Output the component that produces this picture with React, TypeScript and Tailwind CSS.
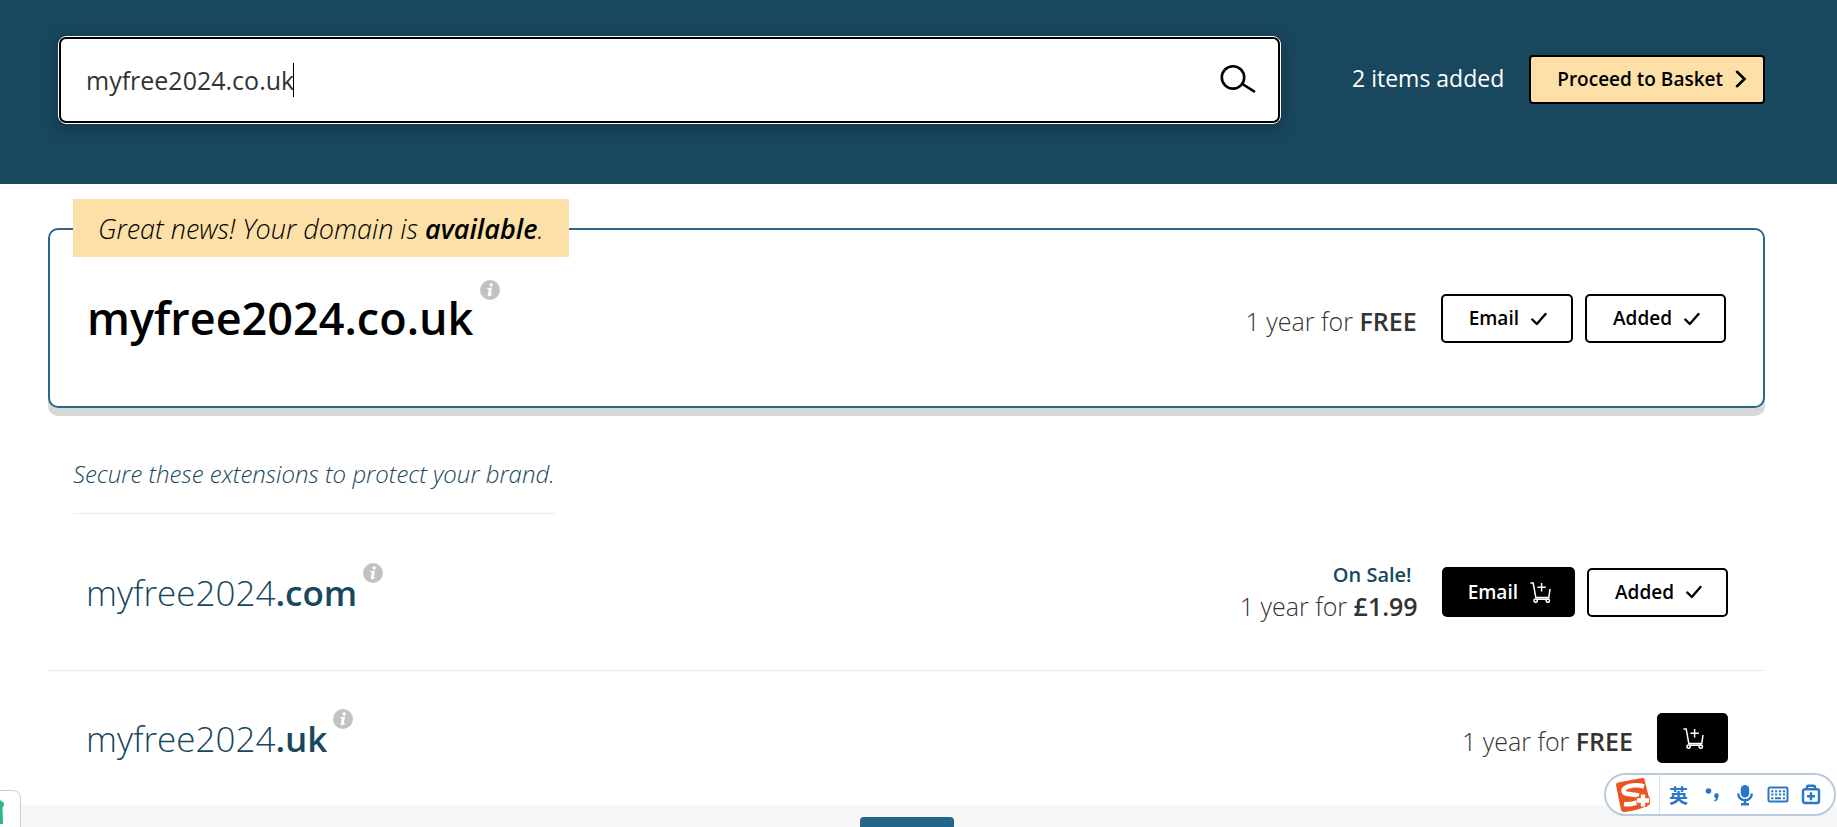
import { useState } from 'react'
import clsx from 'clsx'

type Offer = { name: string; ext: string; price: string; sale?: boolean; full?: boolean }

const OFFERS: Offer[] = [
  { name: 'myfree2024', ext: '.com', price: '£1.99', sale: true, full: true },
  { name: 'myfree2024', ext: '.uk', price: 'FREE' },
]

const CheckIcon = () => (
  <svg viewBox="0 0 16 14" className="h-[14px] w-4" fill="none" stroke="currentColor" strokeWidth="2.4" aria-hidden>
    <path d="M1.3 7.5 5.8 12 14.5 2" strokeLinecap="round" strokeLinejoin="round" />
  </svg>
)

const CartIcon = () => (
  <svg viewBox="0 0 21 21" className="h-[21px] w-[21px]" fill="none" stroke="currentColor" strokeWidth="1.5" aria-hidden>
    <path d="M.4 1h2.8l2.6 14.4h13L20 7M6 17.2h12.8M11.6 1v8.4M7.4 5.2h8.4" />
    <circle cx="5.6" cy="18.6" r="1.7" />
    <circle cx="17.8" cy="18.6" r="1.7" />
  </svg>
)

const SearchIcon = () => (
  <svg viewBox="0 0 36 29" className="h-[29px] w-9" fill="none" stroke="currentColor" strokeWidth="2.6" aria-hidden>
    <circle cx="13" cy="13.4" r="11.2" />
    <path d="M22.5 20 34 27.3" strokeLinecap="round" />
  </svg>
)

const InfoButton = () => (
  <button type="button" aria-label="More information" className="h-5 w-5 self-start rounded-full">
    <svg viewBox="0 0 20 20" className="h-5 w-5" aria-hidden>
      <circle cx="10" cy="10" r="10" fill="#c2c2c2" />
      <circle cx="11.2" cy="4.9" r="1.7" fill="#fff" />
      <path d="M7.2 8.3 12.2 7.6 10.8 13.8c-.1.6.3.6 1.4-.1l.1.8c-1.2 1.5-5 2.8-4.5.2L8.8 9.5 7.1 9.1z" fill="#fff" />
    </svg>
  </button>
)

const OutlineButton = ({ label }: { label: string }) => (
  <button
    type="button"
    className="flex h-[49px] items-center gap-3 rounded-[5px] border-2 border-black bg-white pr-6 pl-[26px] text-[19px] font-semibold text-black"
  >
    {label}
    <CheckIcon />
  </button>
)

const Price = ({ value }: { value: string }) => (
  <p className="text-[25px] leading-8 font-light text-[#333]">
    1 year for <strong className="font-semibold">{value}</strong>
  </p>
)

const OfferRow = ({ offer, last }: { offer: Offer; last: boolean }) => (
  <li
    className={clsx(
      'flex items-start justify-between pr-[37px] pl-[38px]',
      last ? 'h-[134px] pt-[38px]' : 'h-[157px] border-b border-[#ececec] pt-[49px]',
    )}
  >
    <div className="flex gap-[6px]">
      <h3 className="pt-[6px] text-[35px] leading-[48px] font-light text-[#18475e]">
        {offer.name}
        <strong className="font-semibold">{offer.ext}</strong>
      </h3>
      <InfoButton />
    </div>
    <div className="flex items-start gap-6 pt-1">
      <div className="flex flex-col items-end">
        {offer.sale && <p className="-mt-1 pr-[6px] text-[20px] leading-6 font-semibold text-[#18475e]">On Sale!</p>}
        <div className={offer.sale ? 'pt-[3px]' : 'pt-3'}>
          <Price value={offer.price} />
        </div>
      </div>
      <div className="flex items-center gap-3">
        <button
          type="button"
          aria-label={offer.full ? undefined : 'Add to basket'}
          className="flex h-[50px] items-center gap-3 rounded-[5px] bg-black pr-6 pl-[26px] text-[19px] font-semibold text-white"
        >
          {offer.full && 'Email'}
          <CartIcon />
        </button>
        {offer.full && <OutlineButton label="Added" />}
      </div>
    </div>
  </li>
)

const ImeBar = () => (
  <aside
    aria-label="Input method"
    className="absolute right-px bottom-[11px] flex h-[43px] w-[232px] items-center rounded-full border-2 border-[#b9cbe0] bg-white text-[#2878c8]"
  >
    <div className="flex h-full w-[54px] items-center justify-center border-r border-[#dce3ea]">
      <svg viewBox="0 0 36 36" className="h-9 w-9" aria-hidden>
        <path d="M1 8Q1 6 3 5.6L27 1q2-.4 2.5 1.4L35 25q.5 2-1.4 3.3Q22 34 9 35q-2.5 0-3-2z" fill="#ea5420" />
        <path d="M29 9.5C19 6.5 8.5 9.5 8.5 14c0 5 17 2 17 7 0 4.5-9 7-16.5 6" fill="none" stroke="#fff" strokeWidth="4.6" />
        <path d="M28 17v13M21.5 23.5h13" stroke="#ea5420" strokeWidth="8" />
        <path d="M28 17.5v12M22 23.5h12" stroke="#fff" strokeWidth="4.4" />
      </svg>
    </div>
    <div className="grid grid-cols-[repeat(5,33px)] place-items-center pl-[2px]">
      <span className="font-['Noto_Sans_CJK_SC',sans-serif] text-[19px] leading-6 font-bold">英</span>
      <svg viewBox="0 0 14 16" className="h-4 w-[14px]" fill="currentColor" aria-hidden>
        <circle cx="3.5" cy="4" r="2.8" />
        <path d="M9.2 8.2a2.3 2.3 0 1 1 4 1.8c-.1 2.2-1.2 3.9-3.7 4.6l-.4-1.2c1.2-.5 1.8-1.3 1.8-2.3-1 0-1.9-1-1.7-2.9z" />
      </svg>
      <svg viewBox="0 0 18 22" className="h-[22px] w-[18px]" fill="none" stroke="currentColor" strokeWidth="2.4" aria-hidden>
        <rect x="4.8" y="1" width="8.4" height="12.5" rx="4.2" fill="currentColor" stroke="none" />
        <path d="M2.2 9.5a6.8 6.8 0 0 0 13.6 0M9 16.5V20M5 20.2h8" />
      </svg>
      <svg viewBox="0 0 22 17" className="h-[17px] w-[22px]" fill="none" stroke="currentColor" strokeWidth="2" aria-hidden>
        <rect x="1.5" y="1.5" width="19" height="14" rx="1.5" />
        <path d="M4.2 5.2h14M4.2 8.5h14" strokeDasharray="2.2 1.7" />
        <path d="M4.2 12.2h2.2M8 12.2h6M15.8 12.2H18" />
      </svg>
      <svg viewBox="0 0 20 21" className="h-[21px] w-5" fill="none" stroke="currentColor" strokeWidth="2.4" aria-hidden>
        <rect x="2" y="5.2" width="16" height="13.8" rx="2" />
        <path d="M6 5V3.2q0-1.5 1.5-1.5h5q1.5 0 1.5 1.5V5M10 8.2v8M6 12.2h8" />
      </svg>
    </div>
  </aside>
)

export default function App() {
  const [query, setQuery] = useState('myfree2024.co.uk')

  return (
    <div className="relative flex h-screen flex-col overflow-hidden bg-white font-['Open_Sans',sans-serif] text-black">
      <header className="flex shrink-0 items-center bg-[#18475e] pt-9 pr-[72px] pb-[60px] pl-[58px]">
        <form
          onSubmit={(event) => event.preventDefault()}
          className="relative flex h-[88px] flex-1 items-center rounded-[8px] border-3 border-black bg-white pr-[22px] pl-[25px] shadow-[0_4px_16px_2px_rgba(0,0,0,0.22)] outline outline-white -outline-offset-1"
        >
          <input
            type="text"
            aria-label="Search for a domain"
            value={query}
            onChange={(event) => setQuery(event.target.value)}
            className="h-full min-w-0 flex-1 bg-transparent text-[25px] text-[#333] outline-none"
          />
          <span className="absolute top-6 left-[232px] h-[34px] w-px bg-black" aria-hidden />
          <button type="submit" aria-label="Search" className="mb-1">
            <SearchIcon />
          </button>
        </form>
        <div className="mb-[2px] ml-[71px] flex items-center gap-[25px]">
          <span className="pb-[2px] text-[23px] text-white">2 items added</span>
          <button
            type="button"
            className="flex h-[49px] items-center gap-3 rounded-[4px] border-2 border-black bg-[#fce0a8] pr-4 pl-[26px] text-[19px] font-semibold"
          >
            Proceed to Basket
            <svg viewBox="0 0 12 18" className="h-[18px] w-3" fill="none" stroke="currentColor" strokeWidth="2.6" aria-hidden>
              <path d="M2 1.8 9.5 9 2 16.2" strokeLinecap="round" />
            </svg>
          </button>
        </div>
      </header>

      <main className="shrink-0 pr-[72px] pl-12">
        <section className="mt-[44px] flex h-[180px] items-start justify-between rounded-[10px] border-2 border-[#2c6685] pr-[37px] shadow-[0_8px_0_#d8d8d8]">
          <div className="-mt-[31px] pl-[23px]">
            <p className="w-fit bg-[#fce0a8] px-[25px] pt-[2px] text-[27px] leading-[56px] font-light italic">
              Great news! Your domain is <strong className="font-semibold">available</strong>.
            </p>
            <div className="mt-[23px] flex gap-[7px] pl-[14px]">
              <h2 className="pt-2 text-[45px] leading-[60px] font-semibold">myfree2024.co.uk</h2>
              <InfoButton />
            </div>
          </div>
          <div className="flex items-center gap-6 pt-16">
            <div className="pt-1">
              <Price value="FREE" />
            </div>
            <div className="flex gap-3">
              <OutlineButton label="Email" />
              <OutlineButton label="Added" />
            </div>
          </div>
        </section>

        <p className="mt-12 ml-[25px] w-fit border-b border-[#ececec] pb-[21px] text-[24px] leading-9 font-light text-[#18475e] italic">
          Secure these extensions to protect your brand.
        </p>
        <ul>
          {OFFERS.map((offer, index) => (
            <OfferRow key={offer.ext} offer={offer} last={index === OFFERS.length - 1} />
          ))}
        </ul>
      </main>

      <footer className="flex min-h-[22px] flex-1 items-start justify-center overflow-hidden bg-[#f7f7f7] pr-6 pt-3">
        <button type="button" aria-label="Show more" className="h-10 w-[94px] shrink-0 rounded-[4px] bg-[#24658a]" />
      </footer>

      <div className="absolute -bottom-2 -left-4 flex h-[45px] w-[37px] items-start rounded-lg border border-[#ccc] bg-white pt-[9px]">
        <svg viewBox="0 0 20 24" className="h-6 w-5" fill="#26b98a" aria-hidden>
          <path d="M14 0q5 1 5 4.5 0 2-1.5 3L18 24h-5z" />
        </svg>
      </div>
      <ImeBar />
    </div>
  )
}
